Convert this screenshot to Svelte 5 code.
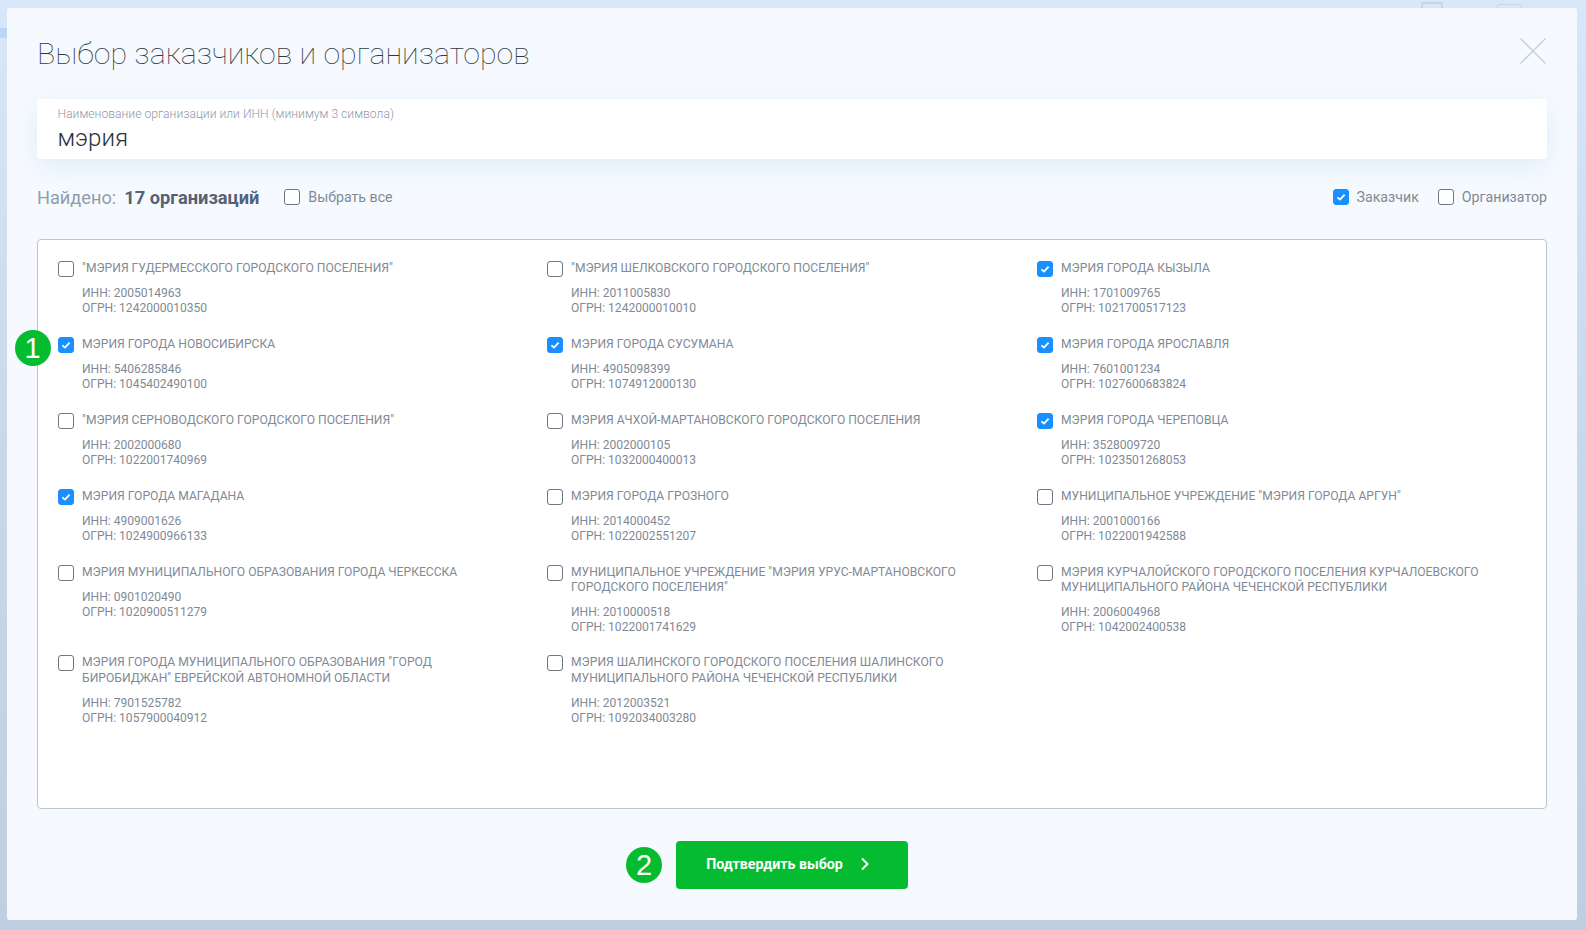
<script>
  const orgs = [
    { n: '"МЭРИЯ ГУДЕРМЕССКОГО ГОРОДСКОГО ПОСЕЛЕНИЯ"', i: '2005014963', o: '1242000010350' },
    { n: '"МЭРИЯ ШЕЛКОВСКОГО ГОРОДСКОГО ПОСЕЛЕНИЯ"', i: '2011005830', o: '1242000010010' },
    { n: 'МЭРИЯ ГОРОДА КЫЗЫЛА', i: '1701009765', o: '1021700517123', c: true },
    { n: 'МЭРИЯ ГОРОДА НОВОСИБИРСКА', i: '5406285846', o: '1045402490100', c: true },
    { n: 'МЭРИЯ ГОРОДА СУСУМАНА', i: '4905098399', o: '1074912000130', c: true },
    { n: 'МЭРИЯ ГОРОДА ЯРОСЛАВЛЯ', i: '7601001234', o: '1027600683824', c: true },
    { n: '"МЭРИЯ СЕРНОВОДСКОГО ГОРОДСКОГО ПОСЕЛЕНИЯ"', i: '2002000680', o: '1022001740969' },
    { n: 'МЭРИЯ АЧХОЙ-МАРТАНОВСКОГО ГОРОДСКОГО ПОСЕЛЕНИЯ', i: '2002000105', o: '1032000400013' },
    { n: 'МЭРИЯ ГОРОДА ЧЕРЕПОВЦА', i: '3528009720', o: '1023501268053', c: true },
    { n: 'МЭРИЯ ГОРОДА МАГАДАНА', i: '4909001626', o: '1024900966133', c: true },
    { n: 'МЭРИЯ ГОРОДА ГРОЗНОГО', i: '2014000452', o: '1022002551207' },
    { n: 'МУНИЦИПАЛЬНОЕ УЧРЕЖДЕНИЕ "МЭРИЯ ГОРОДА АРГУН"', i: '2001000166', o: '1022001942588' },
    { n: 'МЭРИЯ МУНИЦИПАЛЬНОГО ОБРАЗОВАНИЯ ГОРОДА ЧЕРКЕССКА', i: '0901020490', o: '1020900511279' },
    { n: 'МУНИЦИПАЛЬНОЕ УЧРЕЖДЕНИЕ "МЭРИЯ УРУС-МАРТАНОВСКОГО ГОРОДСКОГО ПОСЕЛЕНИЯ"', i: '2010000518', o: '1022001741629' },
    { n: 'МЭРИЯ КУРЧАЛОЙСКОГО ГОРОДСКОГО ПОСЕЛЕНИЯ КУРЧАЛОЕВСКОГО МУНИЦИПАЛЬНОГО РАЙОНА ЧЕЧЕНСКОЙ РЕСПУБЛИКИ', i: '2006004968', o: '1042002400538' },
    { n: 'МЭРИЯ ГОРОДА МУНИЦИПАЛЬНОГО ОБРАЗОВАНИЯ "ГОРОД БИРОБИДЖАН" ЕВРЕЙСКОЙ АВТОНОМНОЙ ОБЛАСТИ', i: '7901525782', o: '1057900040912' },
    { n: 'МЭРИЯ ШАЛИНСКОГО ГОРОДСКОГО ПОСЕЛЕНИЯ ШАЛИНСКОГО МУНИЦИПАЛЬНОГО РАЙОНА ЧЕЧЕНСКОЙ РЕСПУБЛИКИ', i: '2012003521', o: '1092034003280' }
  ];
</script>

{#snippet box(checked)}
  <span class="box" class:on={checked}>
    {#if checked}
      <svg viewBox="0 0 16 16" width="16" height="16"><path d="M4.4 8.3 7 10.6 11.6 5.6" fill="none" stroke="#fff" stroke-width="1.8"/></svg>
    {/if}
  </span>
{/snippet}

<div class="page">
  <span class="ghost g1"></span>
  <span class="ghost g2"></span>
  <span class="ghost g3"></span>
  <div class="modal">
    <header class="head">
      <h1>Выбор заказчиков и организаторов</h1>
      <svg class="close" viewBox="0 0 26 26" width="26" height="26"><path d="M.5.5l25 25M25.5.5l-25 25" fill="none" stroke="#c3ced9" stroke-width="1.3"/></svg>
    </header>

    <div class="search">
      <div class="label">Наименование организации или ИНН (минимум 3 символа)</div>
      <div class="value">мэрия</div>
    </div>

    <div class="filters">
      <span class="found">Найдено:</span>
      <b class="count">17 организаций</b>
      <label class="chk all">{@render box(false)}<span>Выбрать все</span></label>
      <label class="chk cust">{@render box(true)}<span>Заказчик</span></label>
      <label class="chk org">{@render box(false)}<span>Организатор</span></label>
    </div>

    <div class="panel">
      <div class="grid">
        {#each orgs as it}
          <div class="item">
            {@render box(it.c)}
            <div class="info">
              <div class="name">{it.n}</div>
              <div class="meta">ИНН: {it.i}<br />ОГРН: {it.o}</div>
            </div>
          </div>
        {/each}
      </div>
      <span class="badge one">1</span>
    </div>

    <footer class="foot">
      <div class="action">
        <span class="badge two">2</span>
        <button class="confirm">
          <span>Подтвердить выбор</span>
          <svg viewBox="0 0 10 14" width="10" height="14"><path d="M2 1.5 7.5 7 2 12.5" fill="none" stroke="#fff" stroke-width="2"/></svg>
        </button>
      </div>
    </footer>
  </div>
</div>

<style>
  :global(body) {
    margin: 0;
    font-family: Roboto, "Noto Sans", sans-serif;
  }
  .page {
    position: relative;
    box-sizing: border-box;
    width: 1586px;
    height: 930px;
    padding: 8px 9px 10px 7px;
    overflow: hidden;
    background: linear-gradient(180deg, #d8e7f9 0%, #c9d9ec 45%, #bfcee0 100%);
  }
  .ghost {
    position: absolute;
    box-sizing: border-box;
  }
  .g1 {
    left: 1421px;
    top: 2px;
    width: 22px;
    height: 10px;
    border: 2px solid #c2d4e9;
    border-radius: 2px;
  }
  .g2 {
    left: 1497px;
    top: 4px;
    width: 25px;
    height: 10px;
    border: 1px solid #c5d6ea;
    border-radius: 2px;
  }
  .g3 {
    left: 0;
    top: 28px;
    width: 10px;
    height: 10px;
    background: #bcd6f5;
  }
  .modal {
    position: relative;
    box-sizing: border-box;
    height: 912px;
    padding: 0 30px;
    background: #f6faff;
    border-radius: 3px;
    display: flex;
    flex-direction: column;
  }
  .head {
    height: 91px;
    flex: none;
    display: flex;
    align-items: center;
    justify-content: space-between;
  }
  h1 {
    margin: 1px 0 0;
    font-size: 30.3px;
    font-weight: 100;
    color: #2f3a45;
    line-height: 1;
  }
  .close {
    margin: -5px 1px 0 0;
  }
  .search {
    flex: none;
    box-sizing: border-box;
    height: 60px;
    padding: 8px 20.5px 0;
    background: #fff;
    border-radius: 3px;
    box-shadow: 0 8px 26px rgba(110, 160, 220, 0.16);
  }
  .label {
    font-size: 12.15px;
    line-height: 15px;
    font-weight: 300;
    color: #8f9aa7;
  }
  .value {
    margin-top: 2px;
    font-size: 24.1px;
    line-height: 28px;
    font-weight: 300;
    color: #27313b;
  }
  .filters {
    flex: none;
    height: 80px;
    display: flex;
    align-items: center;
    padding-bottom: 4px;
    box-sizing: border-box;
  }
  .found {
    font-size: 18.2px;
    color: #909dac;
  }
  .count {
    margin-left: 8px;
    font-size: 18.25px;
    font-weight: 700;
    color: #536277;
  }
  .chk {
    display: flex;
    align-items: center;
    gap: 8px;
    font-size: 14.2px;
    color: #7f8a96;
  }
  .all { margin-left: 25px; }
  .cust { margin-left: auto; }
  .org { margin-left: 19px; }
  .box {
    box-sizing: border-box;
    flex: none;
    display: block;
    width: 16px;
    height: 16px;
    background: #fff;
    border: 1px solid #6e7680;
    border-radius: 3px;
  }
  .box svg {
    display: block;
    margin: -1px;
  }
  .box.on {
    background: #1a8fff;
    border-color: #1a8fff;
  }
  .panel {
    flex: none;
    position: relative;
    box-sizing: border-box;
    height: 570px;
    background: #fff;
    border: 1px solid #bcc5d0;
    border-radius: 4px;
    padding: 21px 0 0 20px;
  }
  .grid {
    display: grid;
    grid-template-columns: 489px 490px 489px;
    align-items: start;
  }
  .item {
    display: flex;
    align-items: flex-start;
    gap: 8px;
    padding-bottom: 20.6px;
  }
  .info {
    width: 430px;
    font-size: 12.12px;
    line-height: 15.1px;
    color: #7f8a96;
  }
  .meta {
    margin-top: 10px;
    font-size: 12.05px;
  }
  .badge {
    flex: none;
    display: flex;
    align-items: center;
    justify-content: center;
    width: 36px;
    height: 36px;
    border-radius: 50%;
    background: #05bc31;
    color: #fff;
    font-family: "Liberation Sans", Arial, sans-serif;
    font-size: 29px;
    line-height: 1;
  }
  .one {
    position: absolute;
    left: -23.5px;
    top: 90px;
  }
  .foot {
    display: flex;
    justify-content: center;
    padding-top: 32px;
  }
  .action {
    position: relative;
  }
  .two {
    position: absolute;
    left: -50px;
    top: 6px;
  }
  .confirm {
    display: flex;
    align-items: center;
    justify-content: center;
    gap: 17px;
    box-sizing: border-box;
    width: 232px;
    height: 48px;
    padding: 0 8px 2px 0;
    border: 0;
    border-radius: 4px;
    background: #05bc31;
    color: #fff;
    font-family: inherit;
    font-size: 14.2px;
    font-weight: 700;
  }
</style>
